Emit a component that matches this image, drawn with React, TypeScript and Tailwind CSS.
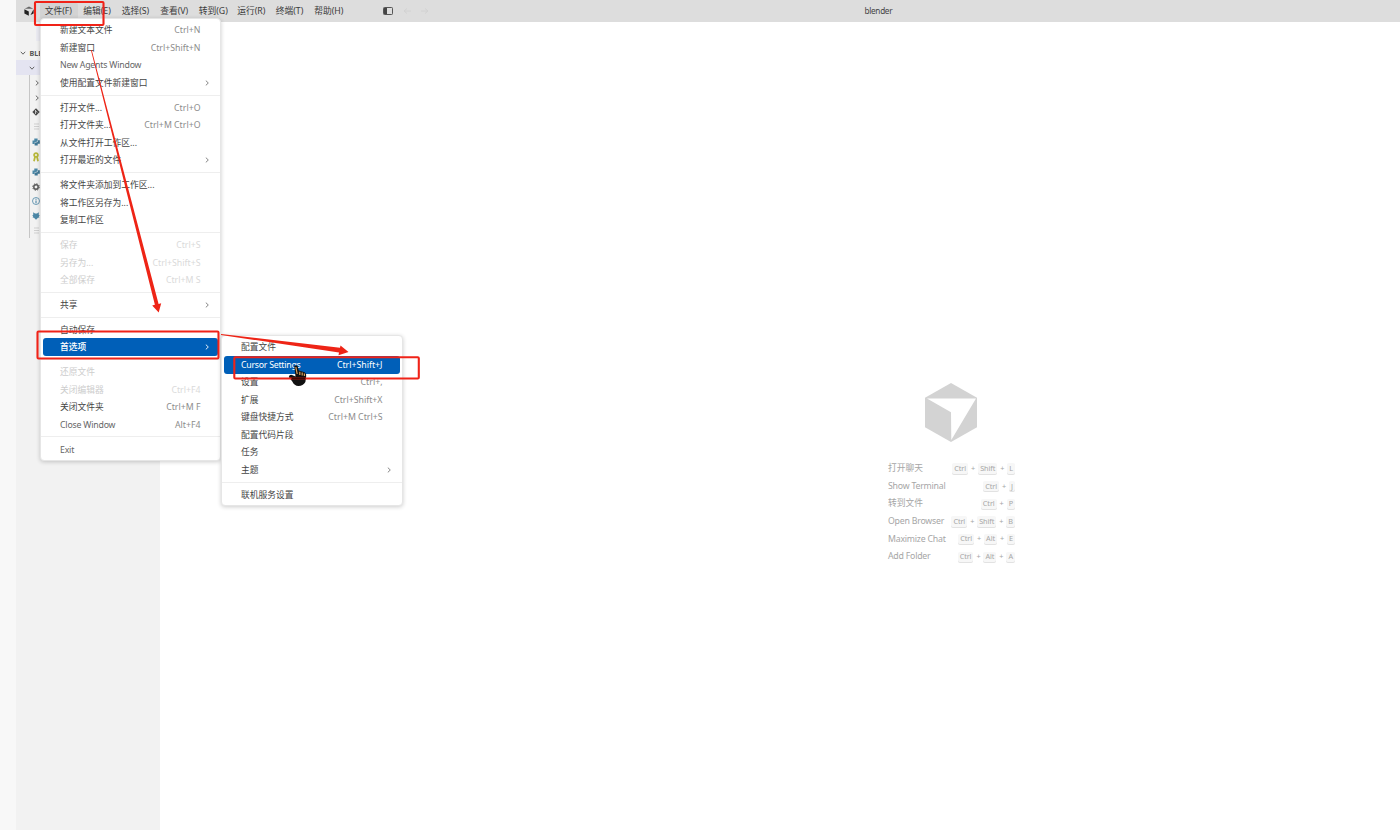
import type { ReactNode } from "react";
import clsx from "clsx";

type MenuEntry = {
  label: string;
  keys?: string;
  submenu?: boolean;
  disabled?: boolean;
  active?: boolean;
};

const menus = ["文件(F)", "编辑(E)", "选择(S)", "查看(V)", "转到(G)", "运行(R)", "终端(T)", "帮助(H)"];

const fileMenu: MenuEntry[][] = [
  [
    { label: "新建文本文件", keys: "Ctrl+N" },
    { label: "新建窗口", keys: "Ctrl+Shift+N" },
    { label: "New Agents Window" },
    { label: "使用配置文件新建窗口", submenu: true },
  ],
  [
    { label: "打开文件...", keys: "Ctrl+O" },
    { label: "打开文件夹...", keys: "Ctrl+M Ctrl+O" },
    { label: "从文件打开工作区..." },
    { label: "打开最近的文件", submenu: true },
  ],
  [{ label: "将文件夹添加到工作区..." }, { label: "将工作区另存为..." }, { label: "复制工作区" }],
  [
    { label: "保存", keys: "Ctrl+S", disabled: true },
    { label: "另存为...", keys: "Ctrl+Shift+S", disabled: true },
    { label: "全部保存", keys: "Ctrl+M S", disabled: true },
  ],
  [{ label: "共享", submenu: true }],
  [{ label: "自动保存" }, { label: "首选项", submenu: true, active: true }],
  [
    { label: "还原文件", disabled: true },
    { label: "关闭编辑器", keys: "Ctrl+F4", disabled: true },
    { label: "关闭文件夹", keys: "Ctrl+M F" },
    { label: "Close Window", keys: "Alt+F4" },
  ],
  [{ label: "Exit" }],
];

const preferencesMenu: MenuEntry[][] = [
  [
    { label: "配置文件" },
    { label: "Cursor Settings", keys: "Ctrl+Shift+J", active: true },
    { label: "设置", keys: "Ctrl+," },
    { label: "扩展", keys: "Ctrl+Shift+X" },
    { label: "键盘快捷方式", keys: "Ctrl+M Ctrl+S" },
    { label: "配置代码片段" },
    { label: "任务" },
    { label: "主题", submenu: true },
  ],
  [{ label: "联机服务设置" }],
];

const shortcuts = [
  { label: "打开聊天", keys: ["Ctrl", "Shift", "L"] },
  { label: "Show Terminal", keys: ["Ctrl", "J"] },
  { label: "转到文件", keys: ["Ctrl", "P"] },
  { label: "Open Browser", keys: ["Ctrl", "Shift", "B"] },
  { label: "Maximize Chat", keys: ["Ctrl", "Alt", "E"] },
  { label: "Add Folder", keys: ["Ctrl", "Alt", "A"] },
];

const isLatin = (text: string) => /^[A-Za-z ]+$/.test(text);

const Chevron = ({ down, className }: { down?: boolean; className?: string }) => (
  <svg viewBox="0 0 6 6" className={clsx("size-1.5 shrink-0", className)} fill="none" stroke="currentColor" strokeWidth="0.9">
    <path d={down ? "M0.8 1.8 L3 4.2 L5.2 1.8" : "M1.8 0.6 L4.3 3 L1.8 5.4"} />
  </svg>
);

const Menu = ({ groups }: { groups: MenuEntry[][] }) => (
  <div className="rounded-[4px] border border-[#e6e6e6] bg-white pt-[2.5px] pb-[2px] shadow-[0_1px_4px_rgba(0,0,0,0.2)]">
    {groups.map((group, i) => (
      <div key={i}>
        {i > 0 && <div className="my-[3.2px] h-px bg-[#eeeeee]" />}
        {group.map((item) => (
          <div
            key={item.label}
            className={clsx(
              "mx-[2px] flex h-[17.5px] items-center rounded-[3px] pl-[17.5px] whitespace-nowrap",
              item.active ? "bg-[#005fb8] text-white" : item.disabled ? "text-[#cdcdcd]" : isLatin(item.label) ? "text-[#666]" : "text-[#444]",
            )}
          >
            <span
              className={clsx(
                "flex-1 pt-px",
                isLatin(item.label) && (item.active ? "tracking-[-0.25px]" : "tracking-[-0.2px]"),
                item.active && !isLatin(item.label) && "font-medium",
              )}
            >
              {item.label}
            </span>
            {item.keys && (
              <span className={clsx("pt-px pr-[17.5px]", item.active ? "" : item.disabled ? "text-[#dadada]" : "text-[#8c8c8c]")}>
                {item.keys}
              </span>
            )}
            {item.submenu && <Chevron className={clsx("mr-[8.5px]", item.active ? "text-white" : "text-[#777]")} />}
          </div>
        ))}
      </div>
    ))}
  </div>
);

const TitleBar = () => (
  <div className="flex h-[22px] items-center bg-[#dddddd] text-[#3b3b3b]">
    <svg viewBox="0 0 10 10" className="ml-[7.5px] h-[10px] w-[10px]">
      <path d="M5 0.4 L9.3 2.7 H0.7 Z" fill="#666" />
      <path d="M0.4 3.3 L4.8 5.4 V9.8 L0.4 7.4 Z" fill="#222" />
      <path d="M9.6 3.3 V7.4 L6.5 9 Z" fill="#222" />
    </svg>
    <div className="ml-[6px] flex">
      {menus.map((m, i) => (
        <div key={m} className={clsx("flex h-4 w-[38.5px] items-center rounded-[2px] pt-px pl-[5.2px]", i === 0 && "bg-[#d3d3d3]")}>
          {m}
        </div>
      ))}
    </div>
    <svg viewBox="0 0 10 8" className="ml-[35px] h-[8px] w-[10px]">
      <rect x="0.5" y="0.5" width="9" height="7" rx="0.8" fill="none" stroke="#555" />
      <rect x="1" y="1" width="3" height="6" fill="#444" />
    </svg>
    <svg viewBox="0 0 28 8" className="ml-[10px] h-[8px] w-[28px]" fill="none" stroke="#d2d2d2">
      <path d="M8 4 H1 M4 1.5 L1 4 L4 6.5" />
      <path d="M18 4 H25 M22 1.5 L25 4 L22 6.5" />
    </svg>
  </div>
);

const TreeRow = ({ children }: { children: ReactNode }) => (
  <div className="flex h-[14.85px] items-center pl-[1px] text-[#555]">{children}</div>
);

const FileLines = () => (
  <svg viewBox="0 0 8 8" className="size-2" fill="none" stroke="#cfcfcf">
    <path d="M2 1 H7 M2 3.5 H7 M2 6 H7" />
  </svg>
);

const Python = () => (
  <svg viewBox="0 0 8 8" className="size-2" fill="#4b87a6">
    <path d="M2.3 0.5 H5.6 V3.5 L2.6 4.2 V6 H0.5 V2.4 H2.3 Z" />
    <path d="M5.7 7.5 H2.6 V4.8 L5.9 4 V2.3 H7.8 V5.7 H5.7 Z" fill="#3f7796" />
  </svg>
);

const Sidebar = () => (
  <div className="w-36 shrink-0 bg-[#f2f2f2]">
    <div className="flex h-6 justify-end pt-1">
      <div className="mr-[118px] h-[15px] w-[6px] bg-[#ebebf2]" />
    </div>
    <div className="flex h-[14px] items-center pl-[4px] text-[7.2px] font-bold text-[#555]">
      <Chevron down />
      <span className="ml-[3.5px] pt-px">BLENDER</span>
    </div>
    <div className="flex h-[15px] items-center bg-[#e4e4f1] pl-[12.5px] text-[#555]">
      <Chevron down />
    </div>
    <div className="ml-[13px] h-[163px] border-l border-[#c6c6c6] pt-[0.3px]">
      <TreeRow>
        <Chevron className="ml-[3px]" />
      </TreeRow>
      <TreeRow>
        <Chevron className="ml-[3px]" />
      </TreeRow>
      <TreeRow>
        <svg viewBox="0 0 8 8" className="ml-px size-2">
          <path d="M4 0.3 L7.7 4 L4 7.7 L0.3 4 Z" fill="#484848" />
          <path d="M3.5 2 V6 M3.5 3 L5.4 4.3" stroke="#ddd" strokeWidth="0.8" fill="none" />
        </svg>
      </TreeRow>
      <TreeRow>
        <span className="ml-px">
          <FileLines />
        </span>
      </TreeRow>
      <TreeRow>
        <span className="ml-px">
          <Python />
        </span>
      </TreeRow>
      <TreeRow>
        <svg viewBox="0 0 8 10" className="ml-px h-[10px] w-2" fill="none" stroke="#b7b73b" strokeWidth="1.8">
          <circle cx="4" cy="3" r="1.9" />
          <path d="M3 4.8 L2 9.3 M5 4.8 L6 9.3" />
        </svg>
      </TreeRow>
      <TreeRow>
        <span className="ml-px">
          <Python />
        </span>
      </TreeRow>
      <TreeRow>
        <svg viewBox="0 0 8 8" className="ml-px size-2" fill="none" stroke="#5b5b5b">
          <circle cx="4" cy="4" r="2.2" strokeWidth="1.5" />
          <circle cx="4" cy="4" r="3.3" strokeDasharray="1.3 1.29" />
        </svg>
      </TreeRow>
      <TreeRow>
        <svg viewBox="0 0 8 8" className="ml-px size-2" fill="none" stroke="#4b87a6">
          <circle cx="4" cy="4" r="3.5" strokeWidth="0.8" />
          <path d="M4 3.4 V6.2 M4 1.7 V2.7" strokeWidth="1.1" />
        </svg>
      </TreeRow>
      <TreeRow>
        <svg viewBox="0 0 8 8" className="ml-px size-2" fill="#4b87a6">
          <path d="M1.2 0.3 L3 1.6 H5 L6.8 0.3 V3 L7.8 3.6 L6.8 4.4 L7.4 5.6 L6 5.8 L4 7.8 L2 5.8 L0.6 5.6 L1.2 4.4 L0.2 3.6 L1.2 3 Z" />
        </svg>
      </TreeRow>
      <TreeRow>
        <span className="ml-px">
          <FileLines />
        </span>
      </TreeRow>
    </div>
  </div>
);

const Welcome = () => (
  <div className="flex flex-1 flex-col bg-white pt-[360.7px] pl-[728px] text-[#a6a6a6]">
    <svg viewBox="0 0 52 59" className="ml-[37px] h-[59px] w-[52px]">
      <path d="M26 0 L52 14.8 V44.2 L26 59 L0 44.2 V14.8 Z" fill="#d3d3d3" />
      <path d="M2 15.6 H51 L26.3 57 L26 29.2 Z" fill="#fff" />
    </svg>
    <div className="mt-[17.5px] w-[127px]">
      {shortcuts.map((s) => (
        <div key={s.label} className="flex h-[17.65px] items-center justify-between whitespace-nowrap">
          <span className={clsx("pt-px", isLatin(s.label) && "tracking-[-0.22px]")}>{s.label}</span>
          <span className="flex items-center gap-[3px] pt-px text-[7.3px] leading-none tracking-[-0.1px]">
            {s.keys.map((k, i) => (
              <span key={k} className="flex items-center gap-[3px]">
                {i > 0 && <span>+</span>}
                <kbd className="rounded-[2px] bg-[#f7f7f7] px-[2px] py-[1.5px] font-[inherit] shadow-[0_1px_0_#e2e2e2]">{k}</kbd>
              </span>
            ))}
          </span>
        </div>
      ))}
    </div>
  </div>
);

// Red boxes and arrows that lead through the menus
const Annotations = () => (
  <svg viewBox="0 0 1400 830" className="pointer-events-none absolute top-0 left-0 h-[830px] w-[1400px]" fill="none">
    <path
      d="M294.3 366.2 Q296 364.6 297.5 366 L298.8 370.5 L304.6 372.2 Q306.6 373.2 306.2 376 L305.4 382 Q303 386 298.5 386 Q294.3 385.8 292.3 381.5 L288.8 377 Q289.4 374.3 292 375 L295.5 376.5 Z"
      fill="#111"
    />
    <path d="M295.8 367.2 L297.2 374 M299.8 371.8 V375 M302.2 372.6 V375.4 M304.4 373.4 V376" stroke="#dca35e" strokeWidth="1.2" />
    <g stroke="#f02318" strokeWidth="2.1">
      <rect x="35" y="2" width="68.5" height="23" rx="1" />
      <rect x="37.5" y="331.5" width="181" height="27" rx="1" />
      <rect x="234.3" y="357.3" width="184.5" height="21.2" rx="1" />
    </g>
    <path d="M291.5 378.5 H305.5" stroke="#3a0905" strokeWidth="2.1" />
    <g fill="#ee2416">
      <path d="M90.9 50 L154.9 304.8 L152.2 305.5 L158.7 312.5 L161.2 303.3 L158.6 303.9 L91.7 50 Z" />
      <path d="M221 333.9 L340 347.8 L340.5 345.6 L348.5 352.1 L338.5 355.2 L339 352.6 L221 334.9 Z" />
    </g>
  </svg>
);

const App = () => {
  return (
    <div className="relative flex h-[830px] w-[1400px] overflow-hidden bg-[#f8f8f8] font-['Noto_Sans','Noto_Sans_CJK_SC',sans-serif] text-[8.75px] leading-none">
      <div className="w-4 shrink-0" />
      <div className="relative flex flex-1 flex-col">
        <TitleBar />
        <div className="flex flex-1">
          <Sidebar />
          <Welcome />
        </div>
        <div className="absolute top-0 left-[848.5px] flex h-[22px] items-center pt-px text-[8.2px] tracking-[-0.3px] text-[#444]">blender</div>
      </div>
      <div className="absolute top-[18px] left-[39.5px] w-[181.5px]">
        <Menu groups={fileMenu} />
      </div>
      <div className="absolute top-[335px] left-[220.5px] w-[182.5px]">
        <Menu groups={preferencesMenu} />
      </div>
      <Annotations />
    </div>
  );
};

export default App;
